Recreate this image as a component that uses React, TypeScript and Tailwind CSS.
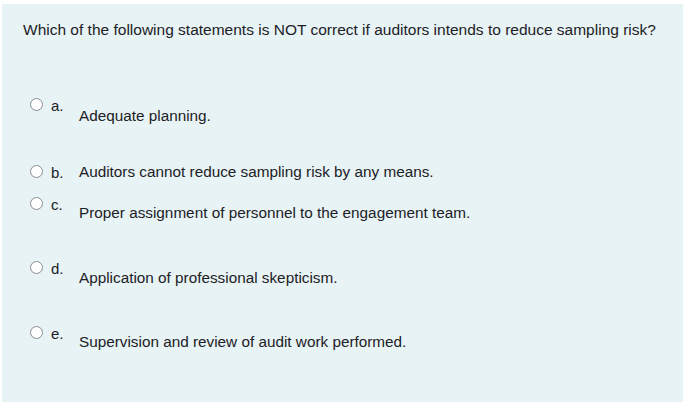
import React from "react";

const Radio = () => (
  <span className="block w-[13px] h-[13px] mt-[1px] rounded-full border border-[#8a8d90] bg-white shrink-0" />
);

type Opt = { l: string; t: string; h: string; off: string };

const opts: Opt[] = [
  { l: "a.", t: "Adequate planning.", h: "h-[67px]", off: "mt-[11px]" },
  { l: "b.", t: "Auditors cannot reduce sampling risk by any means.", h: "h-[32px]", off: "mt-0" },
  { l: "c.", t: "Proper assignment of personnel to the engagement team.", h: "h-[64px]", off: "mt-[9px]" },
  { l: "d.", t: "Application of professional skepticism.", h: "h-[65px]", off: "mt-[10px]" },
  { l: "e.", t: "Supervision and review of audit work performed.", h: "h-[40px]", off: "mt-[9px]" },
];

export default function App() {
  return (
    <div
      className="w-[688px] h-[414px] bg-white pt-[4px] pl-[2px]"
      style={{ fontFamily: '"Liberation Sans", Arial, sans-serif' }}
    >
      <div className="w-[681px] h-[398px] bg-[#e7f3f5] text-[#1d2125] flex flex-col">
        <div className="pt-[16px] pl-[21px] text-[15.5px] leading-[20px] h-[93px]">
          Which of the following statements is NOT correct if auditors intends to reduce sampling risk?
        </div>
        <div className="flex flex-col pl-[28px]">
          {opts.map((o) => (
            <div key={o.l} className={`flex items-start ${o.h}`}>
              <Radio />
              <span className="ml-[8px] mt-[1px] text-[15px] leading-[16px] w-[28px]">{o.l}</span>
              <span className={`text-[15.3px] leading-[16px] ${o.off}`}>{o.t}</span>
            </div>
          ))}
        </div>
      </div>
    </div>
  );
}
